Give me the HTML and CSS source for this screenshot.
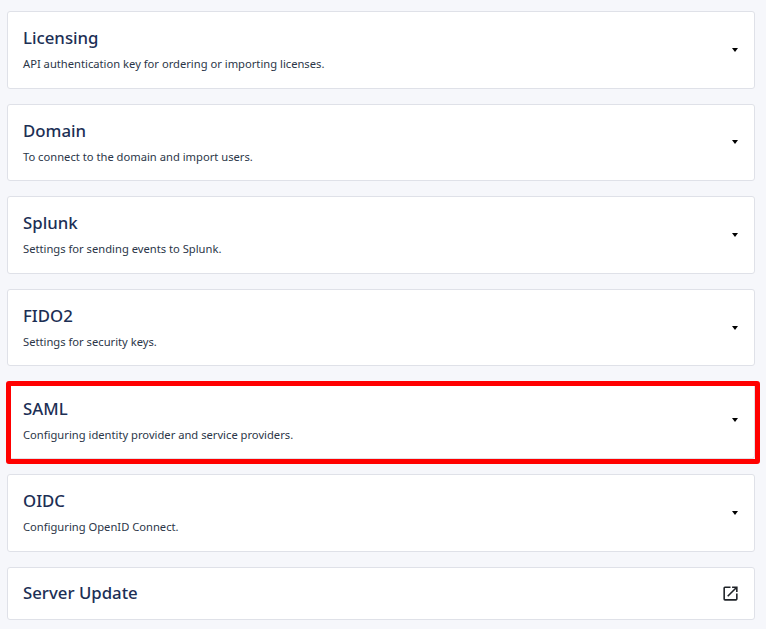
FILE: index.html
```html
<!DOCTYPE html>
<html lang="en">
<head>
<meta charset="utf-8">
<title>Settings</title>
<link rel="stylesheet" href="styles.css">
</head>
<body>
<main class="list">
  <section class="card">
    <div class="text"><h2 class="title">Licensing</h2><p class="desc">API authentication key for ordering or importing licenses.</p></div>
    <span class="caret"></span>
  </section>
  <section class="card">
    <div class="text"><h2 class="title">Domain</h2><p class="desc">To connect to the domain and import users.</p></div>
    <span class="caret"></span>
  </section>
  <section class="card">
    <div class="text"><h2 class="title">Splunk</h2><p class="desc">Settings for sending events to Splunk.</p></div>
    <span class="caret"></span>
  </section>
  <section class="card">
    <div class="text"><h2 class="title">FIDO2</h2><p class="desc">Settings for security keys.</p></div>
    <span class="caret"></span>
  </section>
  <section class="card highlighted">
    <div class="text"><h2 class="title">SAML</h2><p class="desc">Configuring identity provider and service providers.</p></div>
    <span class="caret"></span>
    <div class="redbox"></div>
  </section>
  <section class="card">
    <div class="text"><h2 class="title">OIDC</h2><p class="desc">Configuring OpenID Connect.</p></div>
    <span class="caret"></span>
  </section>
  <section class="card compact">
    <div class="text"><h2 class="title">Server Update</h2></div>
    <svg class="ext" viewBox="0 0 24 24" width="19" height="19" aria-hidden="true"><path fill="#1f2328" d="M19 19H5V5h7V3H5a2 2 0 0 0-2 2v14a2 2 0 0 0 2 2h14c1.1 0 2-.9 2-2v-7h-2v7zM14 3v2h3.59l-9.83 9.83 1.41 1.41L19 6.41V10h2V3h-7z"/></svg>
  </section>
</main>
</body>
</html>
```
FILE: styles.css
```css
* { box-sizing: border-box; }
html, body { height: 100%; }
body {
  margin: 0;
  overflow: hidden;
  background: #f6f7fb;
  font-family: "Noto Sans", "Open Sans", sans-serif;
}
.list {
  display: flex;
  flex-direction: column;
  gap: 15px;
  padding: 11px 11px 0 7px;
}
.card {
  position: relative;
  flex: none;
  display: flex;
  align-items: center;
  justify-content: space-between;
  height: 77.6px;
  padding: 0 15px;
  background: #fff;
  border: 1px solid #dfe1e8;
  border-radius: 3px;
}
.card.compact { height: 53px; }
.text { padding-bottom: 1px; }
.card.compact .text { padding-bottom: 0; }
.title {
  margin: 0;
  font-size: 16.8px;
  line-height: 24px;
  font-weight: 500;
  color: #1c2f55;
}
.desc {
  margin: 6px 0 0;
  font-size: 11.2px;
  line-height: 16px;
  font-weight: 400;
  color: #2b3648;
}
.caret {
  width: 0;
  height: 0;
  margin-right: 1px;
  border-left: 3.5px solid transparent;
  border-right: 3.5px solid transparent;
  border-top: 4px solid #000;
}
.ext { margin-right: -1px; }
.redbox {
  position: absolute;
  top: -1px;
  left: -2px;
  width: 754px;
  height: 83px;
  border: 5px solid #ff0000;
  border-radius: 3px;
  pointer-events: none;
}
```
